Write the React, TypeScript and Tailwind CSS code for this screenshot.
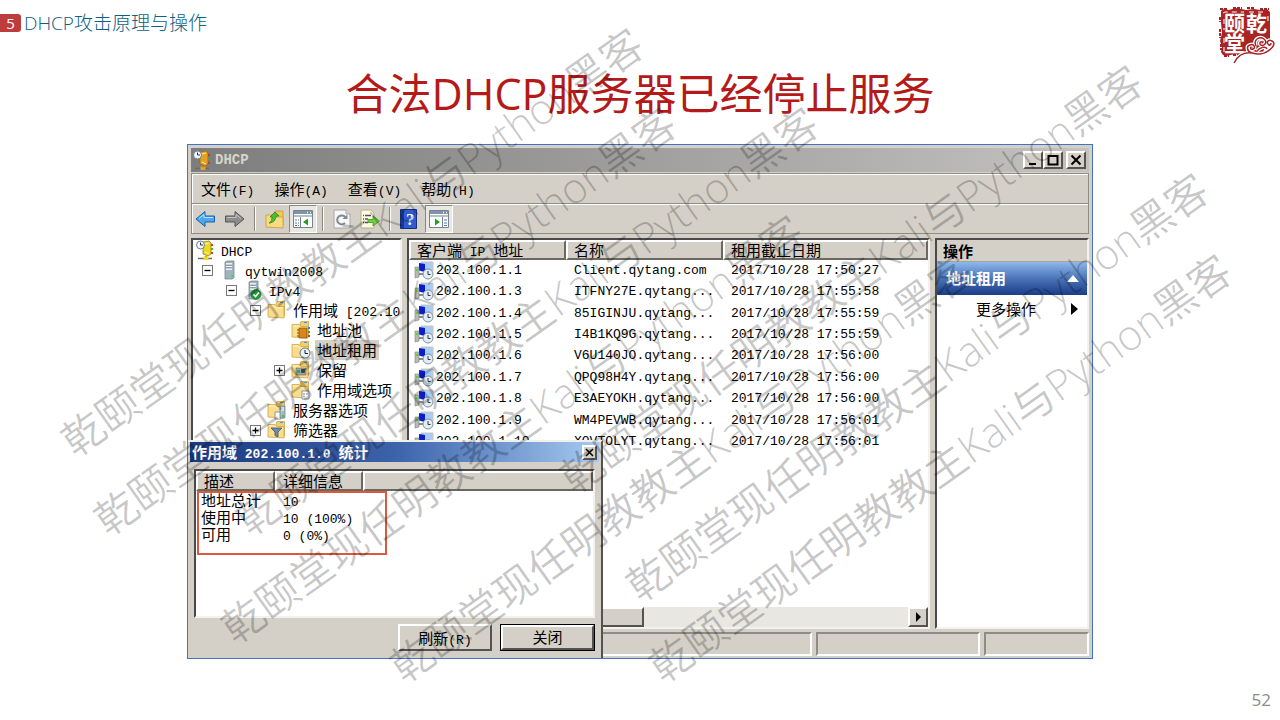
import type { ReactNode } from "react";

const slideFont = "font-['Open_Sans','Noto_Sans_CJK_SC',sans-serif]";
const raised =
  "border-2 border-t-white border-l-white border-r-[#55534f] border-b-[#55534f] bg-[#d4d0c8]";
const sunken =
  "border-2 border-t-[#4a4a4a] border-l-[#4a4a4a] border-r-[#f4f2ee] border-b-[#f4f2ee]";

/* Ideographs keep the surrounding size, Latin runs use the half-width face. */
function Mixed({ text }: { text: string }) {
  return (
    <>
      {text.split(/([\x20-\x7e]+)/).map((part, i) =>
        /^[\x20-\x7e]+$/.test(part) ? (
          <span key={i} className="font-['Liberation_Mono',monospace] text-[13px] leading-none">
            {part}
          </span>
        ) : (
          part
        ),
      )}
    </>
  );
}

function Seal() {
  return (
    <svg viewBox="0 0 60 58" className="h-[58px] w-[60px]" role="img" aria-label="乾颐堂">
      <path
        d="M5 6 8 4 13 5 20 3 30 5 38 4 44 5 51 4 54 7 54 35 50 38 47 48 34 49 26 50 19 49 10 51 7 50 5 47 6 42 4 36 6 28 5 18Z"
        fill="#a62424"
      />
      <path d="M4 4h7M17 3h9M31 3h8M44 4h9M4 12v5M4 24v9M5 39v6M8 51h5M17 50h7" stroke="#a62424" strokeWidth="2" strokeDasharray="3 1" />
      <path d="M7 8 9 7H28M33 7H50M8 14V25M8 33V48M52 11V20" stroke="#fff" strokeWidth="1" strokeDasharray="5 4" fill="none" />
      <g fill="#fff" fontFamily="Noto Sans CJK SC, sans-serif" fontWeight="700" fontSize="21">
        <text x="8" y="26">颐</text>
        <text x="30" y="26">乾</text>
        <text x="8" y="46">堂</text>
      </g>
      <path
        d="M18 58C22 50 29 47 36 48C43 50 48 49 52 46C57 43 60 38 56 36C53 34 50 37 52 39C53 41 55 40 55 38M36 48C31 47 30 41 34 40C38 38 40 43 37 44C35 45 34 43 35 42M40 41C37 34 44 31 48 34C52 37 48 42 45 40C43 39 44 36 46 37M41 46C44 42 50 41 51 44"
        fill="none"
        stroke="#fff"
        strokeWidth="4"
      />
      <path
        d="M18 58C22 50 29 47 36 48C43 50 48 49 52 46C57 43 60 38 56 36C53 34 50 37 52 39C53 41 55 40 55 38M36 48C31 47 30 41 34 40C38 38 40 43 37 44C35 45 34 43 35 42M40 41C37 34 44 31 48 34C52 37 48 42 45 40C43 39 44 36 46 37M41 46C44 42 50 41 51 44"
        fill="none"
        stroke="#a62424"
        strokeWidth="1.5"
      />
    </svg>
  );
}

function DhcpIcon({ tone = "#e8a020" }: { tone?: string }) {
  return (
    <svg viewBox="0 0 20 20" className="h-5 w-5 shrink-0" aria-hidden="true">
      <path d="M8 2l6-1 2 2v11l-3 2-5-2Z" fill={tone} stroke="#8a6a10" strokeWidth=".7" />
      <path d="M10 4l4-1M10 12l4 2" stroke="#fff3b0" />
      <path d="M16 4h2v2h-2zM16 12h2v2h-2z" fill="#d03a20" />
      <path d="M16 8h2v2h-2z" fill="#3fae3a" />
      <path d="M11 16v2M3 18.500h14" stroke="#6b6b6b" strokeWidth="1.500" />
      <path d="M8.500 16.500h5V20h-5z" fill={tone} />
      <circle cx="5.500" cy="5" r="4" fill="#f3f7fb" stroke="#6f7f94" />
      <path d="M5.500 2.500V5h2.500" stroke="#333" fill="none" />
    </svg>
  );
}

function ServerIcon({ ok = false }: { ok?: boolean }) {
  return (
    <svg viewBox="0 0 20 20" className="h-5 w-5 shrink-0" aria-hidden="true">
      <path d="M6 2l2-1h7v17l-2 1H6z" fill="#9fb4c0" stroke="#6d7c86" strokeWidth=".7" />
      <path d="M7 4h6M7 6.500h6M7 9h6" stroke="#fff" strokeWidth="1.300" />
      <path d="M7 5.200h6M7 7.800h6" stroke="#4d5c66" strokeWidth=".6" />
      {ok ? (
        <>
          <circle cx="13" cy="14.500" r="5" fill="#1e9a34" stroke="#0d6c1e" strokeWidth=".6" />
          <path d="M10.500 14.500l2 2 3.500-4" stroke="#fff" strokeWidth="1.700" fill="none" />
        </>
      ) : (
        <path d="M12 15h2v2h-2z" fill="#3be03b" />
      )}
    </svg>
  );
}

function FolderIcon({ children }: { children?: ReactNode }) {
  return (
    <svg viewBox="0 0 20 20" className="h-5 w-5 shrink-0" aria-hidden="true">
      <path d="M9 4l1-2.500h7.500V16H9z" fill="#f3cf6a" stroke="#c99a35" strokeWidth=".7" />
      <path d="M1 4.500h7l2 2h7V18L1 17z" fill="#f9dd8c" stroke="#d0a548" strokeWidth=".8" />
      <path d="M2 6h5.500l2 2H16" stroke="#fff3c8" fill="none" />
      <path d="M13 2.500h3" stroke="#3d9ae0" />
      {children}
    </svg>
  );
}

const overlays: Record<string, ReactNode> = {
  pool: (
    <>
      <path d="M8 8h8v10H8z" fill="#d98518" stroke="#7c4a08" strokeWidth=".7" />
      <path d="M6 10h2M6 13h2M6 16h2" stroke="#7c4a08" />
      <path d="M17 7h2v2h-2z" fill="#2f7de0" />
      <path d="M17 11h2v2h-2z" fill="#35a535" />
      <path d="M17 15h2v2h-2z" fill="#d83a22" />
    </>
  ),
  lease: (
    <>
      <circle cx="14" cy="13" r="5" fill="#eaf2f8" stroke="#5b7184" />
      <path d="M14 10v3.500h3" stroke="#222" fill="none" />
    </>
  ),
  reserve: (
    <>
      <path d="M5 8h10v7H5z" fill="#9aa7a0" stroke="#6a6a50" strokeWidth=".6" />
      <path d="M6 10h3v3H6z" fill="#2fae3c" />
      <path d="M10 9h4v4h-4z" fill="#4b4f60" />
    </>
  ),
  options: (
    <>
      <path d="M11 11h7v8h-7z" fill="#fbfbfb" stroke="#7a8290" strokeWidth=".8" />
      <path d="M12.500 14h1M15.500 14h1M12.500 16.500h1" stroke="#4060a0" strokeWidth="1.400" />
    </>
  ),
  server: (
    <>
      <path d="M8 12h6v7H8z" fill="#fbfbfb" stroke="#7a8290" strokeWidth=".8" />
      <path d="M13 6h5v12h-5z" fill="#a8bac6" stroke="#66757f" strokeWidth=".7" />
      <path d="M14 8h3M14 10h3" stroke="#fff" />
      <path d="M15 15h2v2h-2z" fill="#32cc32" />
    </>
  ),
  filter: <path d="M4 8h11l-4 4v5l-3-1.500V12z" fill="#6d8cab" stroke="#395673" strokeWidth=".8" />,
  folder: null,
};

function ClientIcon() {
  return (
    <svg viewBox="0 0 20 20" className="h-5 w-5 shrink-0" aria-hidden="true">
      <path d="M7 1h12v9H7z" fill="#a9cdf7" stroke="#c8c4bc" />
      <path d="M5 2l6 1v8l-6-1.500z" fill="#0a1ecc" />
      <path d="M1 6h4v10l-4 1z" fill="#b9bab6" stroke="#7d7f7b" strokeWidth=".6" />
      <path d="M2 8h2v2H2z" fill="#3ae03a" />
      <path d="M5 13h6" stroke="#666" strokeWidth="1.500" />
      <circle cx="14" cy="13" r="5" fill="#e2edf1" stroke="#7b929c" />
      <path d="M14 10v3.500h2.500" stroke="#335" fill="none" />
    </svg>
  );
}

type Node = { level: number; icon: string; label: string; box?: "+" | "-"; on?: boolean };
const tree: Node[] = [
  { level: 0, icon: "dhcp", label: "DHCP" },
  { level: 1, icon: "host", label: "qytwin2008", box: "-" },
  { level: 2, icon: "hostok", label: "IPv4", box: "-" },
  { level: 3, icon: "folder", label: "作用域 [202.100.1.0]", box: "-" },
  { level: 4, icon: "pool", label: "地址池" },
  { level: 4, icon: "lease", label: "地址租用", on: true },
  { level: 4, icon: "reserve", label: "保留", box: "+" },
  { level: 4, icon: "options", label: "作用域选项" },
  { level: 3, icon: "server", label: "服务器选项" },
  { level: 3, icon: "filter", label: "筛选器", box: "+" },
];
const indent = ["pl-[2px]", "pl-[2px]", "pl-[26px]", "pl-[50px]", "pl-[74px]"];

function TreeRow({ node }: { node: Node }) {
  return (
    <li className={`flex h-5 items-center whitespace-nowrap ${indent[node.level]}`}>
      {node.level > 0 && (
        <span className="flex w-6 shrink-0 justify-center">
          {node.box && (
            <button
              aria-label={node.box === "+" ? "展开" : "折叠"}
              className="flex h-[11px] w-[11px] items-center justify-center border border-[#777] bg-white"
            >
              <svg viewBox="0 0 9 9" className="h-[9px] w-[9px]" aria-hidden="true">
                <path d={node.box === "+" ? "M1.500 4.500h6M4.500 1.500v6" : "M1.500 4.500h6"} stroke="#000" strokeWidth="1.300" />
              </svg>
            </button>
          )}
        </span>
      )}
      {node.icon === "dhcp" ? (
        <DhcpIcon tone="#e9dc1c" />
      ) : node.icon === "host" || node.icon === "hostok" ? (
        <ServerIcon ok={node.icon === "hostok"} />
      ) : (
        <FolderIcon>{overlays[node.icon]}</FolderIcon>
      )}
      <span className={`ml-1 px-[2px] leading-5 ${node.on ? "bg-[#d4d0c8]" : ""}`}>
        <Mixed text={node.label} />
      </span>
    </li>
  );
}

const leases = [
  ["202.100.1.1", "Client.qytang.com", "2017/10/28 17:50:27"],
  ["202.100.1.3", "ITFNY27E.qytang...", "2017/10/28 17:55:58"],
  ["202.100.1.4", "85IGINJU.qytang...", "2017/10/28 17:55:59"],
  ["202.100.1.5", "I4B1KQ9G.qytang...", "2017/10/28 17:55:59"],
  ["202.100.1.6", "V6U140JO.qytang...", "2017/10/28 17:56:00"],
  ["202.100.1.7", "QPQ98H4Y.qytang...", "2017/10/28 17:56:00"],
  ["202.100.1.8", "E3AEYOKH.qytang...", "2017/10/28 17:56:00"],
  ["202.100.1.9", "WM4PEVWB.qytang...", "2017/10/28 17:56:01"],
  ["202.100.1.10", "XOVTOLYT.qytang...", "2017/10/28 17:56:01"],
];

const headCell =
  "border-2 border-t-white border-l-white border-r-[#6b6862] border-b-[#6b6862] bg-[#d4d0c8] p-0 pl-[6px] text-left font-normal leading-4";

function LeaseList() {
  return (
    <section className={`flex min-w-0 flex-1 flex-col bg-white ${sunken}`}>
      <table className="h-[213px] w-full table-fixed border-separate border-spacing-0 whitespace-nowrap">
        <colgroup>
          <col className="w-[157px]" />
          <col className="w-[157px]" />
          <col />
        </colgroup>
        <thead>
          <tr className="h-5">
            <th className={headCell}><span className="block h-4"><Mixed text="客户端 IP 地址" /></span></th>
            <th className={headCell}><span className="block h-4">名称</span></th>
            <th className={headCell}><span className="block h-4">租用截止日期</span></th>
          </tr>
        </thead>
        <tbody className="font-['Liberation_Mono',monospace] text-[13px] leading-4">
          {leases.map(([ip, name, date]) => (
            <tr key={ip}>
              <td className="p-0 pl-[5px]">
                <span className="flex items-center gap-[2px]">
                  <ClientIcon />
                  {ip}
                </span>
              </td>
              <td className="p-0 pl-2">{name}</td>
              <td className="p-0 pl-2">{date}</td>
            </tr>
          ))}
        </tbody>
      </table>
      <div className="mt-auto flex h-5 bg-[#e9e7e2]">
        <div className={`w-[235px] ${raised}`} />
        <button aria-label="向右滚动" className={`ml-auto flex w-5 items-center justify-center ${raised}`}>
          <svg viewBox="0 0 8 10" className="h-[10px] w-2" aria-hidden="true">
            <path d="M2 0v10l5-5z" />
          </svg>
        </button>
      </div>
    </section>
  );
}

function Separator() {
  return <span className="mx-[9px] h-6 w-[2px] border-l border-l-[#8a8780] bg-white" />;
}

function PaneIcon({ flip = false }: { flip?: boolean }) {
  return (
    <svg viewBox="0 0 20 18" className="h-[18px] w-5" aria-hidden="true">
      <path d="M.5.5h19v17H.5z" fill="#fff" stroke="#76828f" />
      <path d="M1 1h18v3H1z" fill="#7e93ad" />
      <path d="M14 2.500h1M17 2.500h1" stroke="#fff" strokeWidth="1.500" />
      <path d="M1 6h18" stroke="#b6bec8" strokeWidth="2" />
      {flip ? (
        <>
          <path d="M13.500 7v10" stroke="#76828f" />
          <path d="M15 10h3M15 13h3M15 15.500h3" stroke="#4674b4" />
          <path d="M6 8.500v7l5-3.500z" fill="#21a121" />
        </>
      ) : (
        <>
          <path d="M7.500 7v10" stroke="#76828f" />
          <path d="M2 10h4M2 13h4M2 15.500h4" stroke="#4674b4" strokeDasharray="2 1" />
          <path d="M15 8.500v7l-5-3.500z" fill="#21a121" />
        </>
      )}
    </svg>
  );
}

const pressed =
  "flex h-7 w-7 items-center justify-center border border-t-[#8a8780] border-l-[#8a8780] border-r-white border-b-white bg-[#e9e7e2]";

function Toolbar() {
  return (
    <div className="flex h-[31px] items-center border border-[#8f8c86] pl-[3px] shadow-[inset_1px_1px_0_#fff]">
      <button aria-label="后退">
        <svg viewBox="0 0 21 18" className="h-[18px] w-[21px]">
          <path d="M1 9l9-7.500v4.500h9.500v6H10v4.500z" fill="#4aa9ea" stroke="#1b5fae" strokeLinejoin="round" />
          <path d="M4 8.500l5-4v3h9" stroke="#b9e2fb" fill="none" />
        </svg>
      </button>
      <button aria-label="前进" className="ml-2">
        <svg viewBox="0 0 21 18" className="h-[18px] w-[21px]">
          <path d="M20 9l-9-7.500v4.500H1.500v6H11v4.500z" fill="#8d8d8d" stroke="#555" strokeLinejoin="round" />
          <path d="M3 7.500h9v-3l5 4" stroke="#c4c4c4" fill="none" />
        </svg>
      </button>
      <Separator />
      <button aria-label="向上一级">
        <svg viewBox="0 0 20 20" className="h-5 w-5">
          <path d="M9 5l1-3h8v14H9z" fill="#f0c95e" stroke="#c2922c" strokeWidth=".7" />
          <path d="M1 6h7l2 2h8v11L1 18z" fill="#f8da82" stroke="#c99a35" strokeWidth=".8" />
          <path d="M4 14c2-1 3-3 3-6H5l5-5 4 4h-3c0 4-3 7-7 7z" fill="#47c332" stroke="#227c18" strokeWidth=".7" />
        </svg>
      </button>
      <button aria-label="显示控制台树" className={`ml-1 ${pressed}`}><PaneIcon /></button>
      <span className="mx-[5px] h-6 w-[2px] border-l border-l-[#8a8780] bg-white" />
      <button aria-label="刷新" className="ml-[3px]">
        <svg viewBox="0 0 20 20" className="h-5 w-5">
          <path d="M2 1h12l4 4v14H2z" fill="#f7f7f7" stroke="#a8a8a8" />
          <path d="M14 1v4h4" fill="#ddd" stroke="#a8a8a8" />
          <path d="M13.500 8.500A4.500 4.500 0 1 0 13 14" stroke="#7f8a94" strokeWidth="2" fill="none" />
          <path d="M10.500 10h5V5.500z" fill="#7f8a94" />
        </svg>
      </button>
      <button aria-label="导出列表" className="ml-2">
        <svg viewBox="0 0 20 20" className="h-5 w-5">
          <path d="M1 1h10l3 3v15H1z" fill="#fffbe0" stroke="#b5ae88" />
          <path d="M3 6.500h8M3 10h5M3 13.500h5" stroke="#4d4d6a" strokeWidth="1.300" strokeDasharray="1 1 5 0" />
          <path d="M8 10.500h5V7l6.500 5-6.500 5v-3.500H8z" fill="#6fd048" stroke="#3a9820" strokeWidth=".8" />
        </svg>
      </button>
      <Separator />
      <button aria-label="帮助">
        <svg viewBox="0 0 17 20" className="h-5 w-[17px]">
          <path d="M.5.5h16v19H.5z" fill="#2f5ad0" stroke="#14307c" />
          <path d="M1 1h3v18H1z" fill="#163a9c" />
          <text x="6" y="16" fill="#fff" fontFamily="Liberation Serif, serif" fontWeight="700" fontSize="17">?</text>
        </svg>
      </button>
      <button aria-label="显示操作窗格" className={`ml-2 ${pressed}`}><PaneIcon flip /></button>
    </div>
  );
}

function WindowButton({ label, d, className = "" }: { label: string; d: string; className?: string }) {
  return (
    <button aria-label={label} className={`flex h-[18px] w-5 items-center justify-center ${raised} ${className}`}>
      <svg viewBox="0 0 12 12" className="h-3 w-3" fill="none" stroke="#000" strokeWidth="2" aria-hidden="true">
        <path d={d} />
      </svg>
    </button>
  );
}

const stats = [
  ["地址总计", "10"],
  ["使用中", "10 (100%)"],
  ["可用", "0 (0%)"],
];

function StatsDialog() {
  return (
    <section
      role="dialog"
      aria-label="作用域 202.100.1.0 统计"
      className="absolute bottom-0 left-0 flex h-[218px] w-[415px] flex-col border-t-2 border-r-2 border-t-[#f1efea] border-r-[#55534f] bg-[#d4d0c8]"
    >
      <header className="mr-[2px] ml-[2px] flex h-5 items-center justify-between bg-linear-to-r from-[#1b3a80] via-[#3c62aa] to-[#a6caf0] pr-[2px] pl-[2px] text-[15px] font-bold text-white">
        <h2 className="leading-5"><Mixed text="作用域 202.100.1.0 统计" /></h2>
        <button aria-label="关闭窗口" className={`flex h-[15px] w-[15px] items-center justify-center ${raised}`}>
          <svg viewBox="0 0 9 9" className="h-[9px] w-[9px]" stroke="#000" strokeWidth="1.500" aria-hidden="true">
            <path d="M1 1l7 7M8 1l-7 7" />
          </svg>
        </button>
      </header>
      <div className={`mx-[6px] mt-[7px] h-[149px] bg-white ${sunken}`}>
        <table className="w-full table-fixed border-separate border-spacing-0 leading-4 whitespace-nowrap">
          <colgroup>
            <col className="w-[79px]" />
            <col className="w-[88px]" />
            <col />
          </colgroup>
          <thead>
            <tr className="h-5">
              <th className={headCell}><span className="block h-4">描述</span></th>
              <th className={headCell}><span className="block h-4">详细信息</span></th>
              <th aria-label="空列" className={headCell} />
            </tr>
          </thead>
          <tbody>
            {stats.map(([k, v]) => (
              <tr key={k} className="h-[17px]">
                <td className="p-0 pl-[5px]"><span className="block h-4">{k}</span></td>
                <td className="p-0 pl-2"><span className="block h-4"><Mixed text={v} /></span></td>
                <td className="p-0" />
              </tr>
            ))}
          </tbody>
        </table>
      </div>
      <div className="absolute top-[49px] left-[9px] h-[64px] w-[190px] border-2 border-[#dc5a3c]" />
      <div className="mt-[6px] mr-[6px] flex justify-end gap-2">
        <button className={`h-[27px] w-[94px] leading-[22px] ${raised}`}><Mixed text="刷新(R)" /></button>
        <button className="h-[27px] w-[95px] border border-black">
          <span className={`flex h-full items-center justify-center ${raised}`}>关闭</span>
        </button>
      </div>
    </section>
  );
}

function Console() {
  return (
    <main className="relative mx-auto mt-[18px] flex w-full max-w-[906px] flex-col border border-[#4472c4] bg-[#d4d0c8] px-[3px] pt-[3px] font-['Noto_Sans_CJK_SC',sans-serif] text-[15px] text-black">
      <header className="flex h-[24px] items-center bg-linear-to-r from-[#7d7d7d] to-[#c3c2bf] pr-[3px] pl-[1px] text-[#d8d4cc]">
        <DhcpIcon />
        <span className="ml-[3px] font-['Liberation_Mono',monospace] text-[14px] font-bold">DHCP</span>
        <WindowButton label="最小化" d="M2 10h7" className="ml-auto" />
        <WindowButton label="最大化" d="M1.500 1v9.500h9V1M1 2h10" />
        <WindowButton label="关闭" d="M1.500 1.500l9 9M10.500 1.500l-9 9" className="ml-[3px]" />
      </header>
      <nav className="mt-[1px] flex h-[30px] items-center gap-5 border border-b-0 border-[#8f8c86] pl-[9px] leading-5 shadow-[inset_1px_1px_0_#fff]">
        {["文件(F)", "操作(A)", "查看(V)", "帮助(H)"].map((m) => (
          <button key={m}><Mixed text={m} /></button>
        ))}
      </nav>
      <Toolbar />
      <div className="mt-1 flex h-[391px] gap-[5px]">
        <section className={`w-[211px] shrink-0 overflow-hidden bg-white ${sunken}`}>
          <ul>
            {tree.map((n) => (
              <TreeRow key={n.label} node={n} />
            ))}
          </ul>
        </section>
        <LeaseList />
        <aside className={`w-[154px] shrink-0 bg-white ${sunken}`}>
          <h2 className="h-[22px] border-b border-b-[#a5a29b] bg-[#d4d0c8] pl-[6px] leading-[22px] font-bold">操作</h2>
          <button className="flex h-[33px] w-full items-center justify-between bg-linear-to-b from-[#8fb8ea] via-[#4a74b8] to-[#1c3c88] pr-2 pl-[9px] font-bold text-white">
            地址租用
            <svg viewBox="0 0 12 7" className="h-[7px] w-3" fill="#fff" aria-hidden="true"><path d="M0 7 6 0l6 7z" /></svg>
          </button>
          <button className="flex h-7 w-full items-center justify-between pr-[9px] pl-[39px]">
            更多操作
            <svg viewBox="0 0 7 12" className="h-3 w-[7px]" aria-hidden="true"><path d="M0 0v12l7-6z" /></svg>
          </button>
        </aside>
      </div>
      <footer className="mt-[3px] mb-[2px] flex h-6 gap-1">
        <span className="flex-1 border-2 border-t-[#8f8c86] border-l-[#8f8c86] border-r-white border-b-white" />
        <span className="w-[164px] border-2 border-t-[#8f8c86] border-l-[#8f8c86] border-r-white border-b-white" />
        <span className="w-[105px] border-2 border-t-[#8f8c86] border-l-[#8f8c86] border-r-white border-b-white" />
      </footer>
      <StatsDialog />
    </main>
  );
}

const marks = [
  "left-[62px] top-[409px]",
  "left-[95px] top-[488px]",
  "left-[237px] top-[488px]",
  "left-[222px] top-[596px]",
  "left-[391px] top-[635px]",
  "left-[561px] top-[446px]",
  "left-[627px] top-[554px]",
  "left-[650px] top-[635px]",
];

export default function App() {
  return (
    <div className={`relative flex min-h-screen flex-col overflow-hidden bg-white ${slideFont}`}>
      <header className="flex h-[62px] items-start justify-between">
        <div className="flex items-center gap-[3px] pt-[9px]">
          <span className="flex h-[18px] w-[21px] items-center justify-center rounded-r-[3px] bg-[#bf3c3c] text-[15px] text-white">5</span>
          <span className="text-[19px] leading-7 font-light text-[#0d6184]">DHCP攻击原理与操作</span>
        </div>
        <div className="pt-[5px] pr-1"><Seal /></div>
      </header>
      <h1 className="text-center text-[43px] leading-[64px] text-[#b41a1a]">合法DHCP服务器已经停止服务</h1>
      <Console />
      <footer className="mt-auto pr-[9px] pb-2 text-right text-[17px] leading-6 text-[#8c8c8c]">52</footer>
      <div className="pointer-events-none absolute inset-0 overflow-hidden">
        {marks.map((place) => (
          <span
            key={place}
            aria-hidden="true"
            className={`absolute origin-[21px_24px] rotate-[-35.4deg] text-[42px] leading-[48px] font-[350] whitespace-nowrap text-black/22 ${place}`}
          >
            乾颐堂现任明教教主Kali与Python黑客
          </span>
        ))}
      </div>
    </div>
  );
}
